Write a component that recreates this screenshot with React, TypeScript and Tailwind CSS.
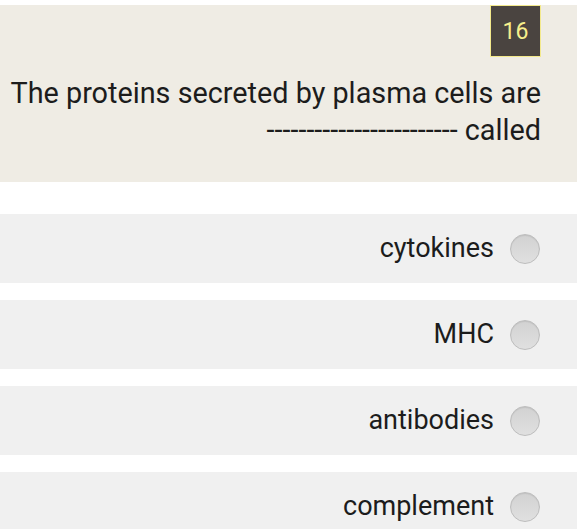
const options = ["cytokines", "MHC", "antibodies", "complement"];

function Radio() {
  return (
    <span className="w-[30px] h-[30px] shrink-0 rounded-full border border-[#bdbdbd] bg-gradient-to-b from-[#d2d2d2] to-[#e0e0e0] shadow-[inset_0_1px_1px_rgba(0,0,0,0.08)]" />
  );
}

export default function App() {
  return (
    <div className="w-[580px] h-[529px] bg-white overflow-hidden pt-[5px] font-['Roboto',sans-serif] text-[#1c1c1c]">
      <div className="w-[577px] h-[177px] bg-[#efece4] pr-[36px] flex flex-col items-end">
        <div className="w-[51px] h-[52px] bg-[#4a4440] border border-[#f3e98c] flex items-center justify-center text-[#f6ef8c] text-[23px] leading-none">
          16
        </div>
        <div className="mt-[18px] text-right text-[28.8px] leading-[37px] whitespace-nowrap">
          <div>The proteins secreted by plasma cells are</div>
          <div>------------------------ called</div>
        </div>
      </div>
      <div className="mt-[32px] flex flex-col gap-[17px]">
        {options.map((o) => (
          <div
            key={o}
            className="w-[577px] h-[69px] bg-[#f0f0f0] flex items-center justify-end gap-[16px] pr-[37px]"
          >
            <span className="text-[27px]">{o}</span>
            <Radio />
          </div>
        ))}
      </div>
    </div>
  );
}
